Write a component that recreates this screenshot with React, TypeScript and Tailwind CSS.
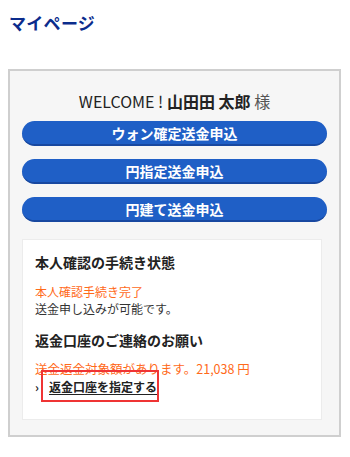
export default function App() {
  return (
    <div
      className="w-[350px] h-[457px] bg-white"
      style={{ fontFamily: '"Noto Sans CJK JP", "Noto Sans", sans-serif' }}
    >
      <h1 className="pl-[9px] pt-[12px] text-[17px] leading-[22px] font-bold text-[#0b2c8c] tracking-[0.3px]">
        マイページ
      </h1>

      <div className="mt-[35px] ml-[8px] w-[333px] h-[368px] border-2 border-[#cfcfcf] bg-[#f6f6f6] pl-[12px]">
        <p className="pt-[20px] pr-[12px] text-center text-[16px] leading-[20px] text-[#222]">
          WELCOME ! <span className="font-bold">山田田 太郎</span> <span className="text-[#555]">様</span>
        </p>

        <div className="mt-[10px] flex flex-col gap-[13px]">
          {['ウォン確定送金申込', '円指定送金申込', '円建て送金申込'].map((t) => (
            <button
              key={t}
              className="w-[305px] h-[25px] rounded-full bg-[#1f5fc6] border-b-2 border-[#1848a0] text-white text-[14px] font-bold leading-[22px]"
            >
              {t}
            </button>
          ))}
        </div>

        <div className="relative mt-[17px] w-[300px] h-[181px] bg-white border border-[#ececec] pl-[12px] pt-[12px]">
          <h2 className="text-[14px] leading-[20px] font-bold text-[#222]">本人確認の手続き状態</h2>
          <p className="mt-[11px] text-[12px] leading-[17px] text-[#ff6a1a]">本人確認手続き完了</p>
          <p className="text-[12px] leading-[17px] text-[#333]">送金申し込みが可能です。</p>
          <h2 className="mt-[13px] text-[14px] leading-[20px] font-bold text-[#222]">返金口座のご連絡のお願い</h2>
          <p className="mt-[10px] text-[12.5px] leading-[17px] text-[#ff6a1a]">送金返金対象額があります。21,038 円</p>
          <p className="mt-[1px] flex items-center text-[12px] leading-[17px] text-[#222]">
            <span className="w-[14px] font-bold">›</span>
            <a className="font-bold underline underline-offset-2">返金口座を指定する</a>
          </p>
          <div className="absolute left-[18px] top-[130px] w-[118px] h-[32px] border-2 border-[#ef3434]" />
        </div>
      </div>
    </div>
  )
}
